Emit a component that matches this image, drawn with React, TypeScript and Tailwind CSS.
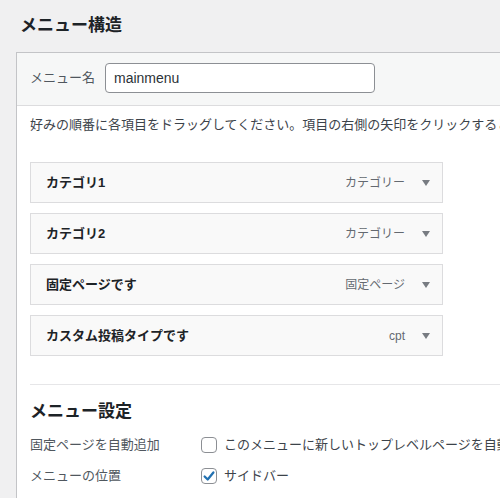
import React from "react";

const menuItems = [
  { title: "カテゴリ1", type: "カテゴリー" },
  { title: "カテゴリ2", type: "カテゴリー" },
  { title: "固定ページです", type: "固定ページ" },
  { title: "カスタム投稿タイプです", type: "cpt" },
];

const App: React.FC = () => {
  return (
    <div
      className="w-[500px] h-[498px] overflow-hidden bg-[#f0f0f1] text-[#3c434a]"
      style={{ fontFamily: '"Liberation Sans", "Noto Sans CJK JP", sans-serif' }}
    >
      <h2 className="pl-5 pt-[15px] text-[17px] font-bold leading-[22px] text-[#1d2327]">メニュー構造</h2>
      <div className="ml-4 mt-[15px] w-[560px] border border-[#c3c4c7] bg-white">
        {/* header */}
        <div className="flex items-center gap-[10px] border-b border-[#dcdcde] bg-[#f6f7f7] pl-[13px] pt-[10px] pb-[12px]">
          <label className="text-[13px] text-[#50575e]" htmlFor="menu-name">メニュー名</label>
          <input
            id="menu-name"
            type="text"
            defaultValue="mainmenu"
            className="h-[30px] w-[270px] rounded border border-[#8c8f94] bg-white px-2 text-[14px] text-[#2c3338] focus:outline-none"
          />
        </div>
        {/* body */}
        <div className="pl-[13px] pt-[9px] pb-4">
          <p className="whitespace-nowrap text-[13px] leading-5 text-[#3c434a]">
            好みの順番に各項目をドラッグしてください。項目の右側の矢印をクリックすると、追加の設定オプションが表示されます。
          </p>
          <ul className="mt-[27px] flex flex-col gap-[10px]">
            {menuItems.map((item) => (
              <li
                key={item.title}
                className="flex h-[41px] w-[413px] items-center justify-between border border-[#dcdcde] bg-[#f9f9f9] pl-[15px] pr-[12px]"
              >
                <span className="text-[13px] font-bold text-[#1d2327]">{item.title}</span>
                <span className="flex items-center gap-[17px]">
                  <span className="text-[12px] text-[#646970]">{item.type}</span>
                  <svg width="8" height="6" viewBox="0 0 8 6">
                    <polygon points="0,0 8,0 4,6" fill="#787c82" />
                  </svg>
                </span>
              </li>
            ))}
          </ul>
          <div className="mt-[28px] border-t border-[#e6e6e8]">
            <h3 className="mt-[16px] text-[17px] font-bold leading-[22px] text-[#1d2327]">メニュー設定</h3>
            <div className="mt-[6px]">
              <div className="flex h-[31px] items-center">
                <span className="w-[171px] text-[13px] text-[#50575e]">固定ページを自動追加</span>
                <span className="h-4 w-4 rounded border border-[#8c8f94] bg-white" />
                <span className="ml-[7px] whitespace-nowrap text-[13px] text-[#3c434a]">
                  このメニューに新しいトップレベルページを自動的に追加
                </span>
              </div>
              <div className="flex h-[31px] items-center">
                <span className="w-[171px] text-[13px] text-[#50575e]">メニューの位置</span>
                <span className="flex h-4 w-4 items-center justify-center rounded border border-[#8c8f94] bg-white">
                  <svg width="14" height="14" viewBox="0 0 16 16">
                    <path d="M3 8.5 L6.5 12 L13 4" fill="none" stroke="#2271b1" strokeWidth="2.6" strokeLinecap="round" strokeLinejoin="round" />
                  </svg>
                </span>
                <span className="ml-[7px] text-[13px] text-[#3c434a]">サイドバー</span>
              </div>
            </div>
          </div>
        </div>
      </div>
    </div>
  );
};

export default App;
